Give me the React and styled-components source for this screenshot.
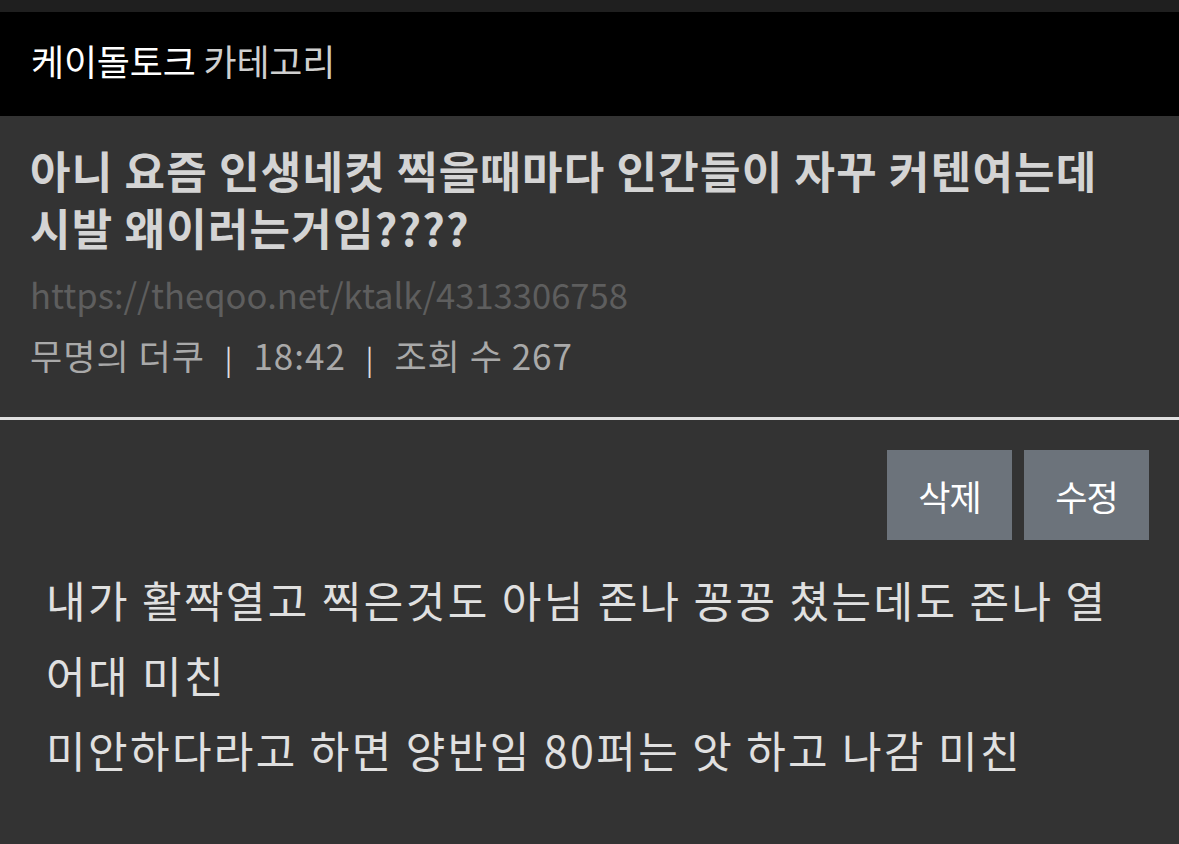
import React from 'react'
import styled, { createGlobalStyle } from 'styled-components';

const GlobalStyle = createGlobalStyle`
    html, body {
        margin: 0;
        padding: 0;
        background: #333333;
        font-family: 'Noto Sans CJK KR', 'Noto Sans', sans-serif;
    }
`;

const post = {
    board: '케이돌토크',
    title: '아니 요즘 인생네컷 찍을때마다 인간들이 자꾸 커텐여는데 시발 왜이러는거임????',
    url: 'https://theqoo.net/ktalk/4313306758',
    author: '무명의 더쿠',
    time: '18:42',
    views: 267,
    body: [
        '내가 활짝열고 찍은것도 아님 존나 꽁꽁 쳤는데도 존나 열어대 미친',
        '미안하다라고 하면 양반임 80퍼는 앗 하고 나감 미친',
    ],
}

const App = () => {
    return (
        <Page>
            <GlobalStyle />
            <TopStrip />
            <Header>
                <BoardName>{post.board}</BoardName> <Category>카테고리</Category>
            </Header>
            <TitleSection>
                <Title>{post.title}</Title>
                <Url>{post.url}</Url>
                <Meta>
                    {post.author}
                    <Sep>|</Sep>
                    {post.time}
                    <Sep>|</Sep>
                    조회 수 {post.views}
                </Meta>
            </TitleSection>
            <Actions>
                <ActionButton>삭제</ActionButton>
                <ActionButton>수정</ActionButton>
            </Actions>
            <Body>
                {post.body.map((line, i) => (
                    <p key={i}>{line}</p>
                ))}
            </Body>
        </Page>
    )
}

export default App

const Page = styled.div`
    width: 1179px;
    min-height: 844px;
    background: #333333;
`;

const TopStrip = styled.div`
    height: 12px;
    background: #1f1f1f;
`;

const Header = styled.div`
    height: 104px;
    padding: 0 30px 0 31px;
    box-sizing: border-box;
    background: #000;
    font-size: 36px;
    line-height: 96px;
    letter-spacing: -0.2px;
`;

const BoardName = styled.span`
    color: #ffffff;
`;

const Category = styled.span`
    color: #cfcfcf;
`;

const TitleSection = styled.div`
    padding: 26px 30px 36px;
    border-bottom: 3px solid #e0e0e0;
`;

const Title = styled.h1`
    margin: 0;
    font-size: 44px;
    line-height: 57px;
    font-weight: 700;
    color: #d4d4d4;
    letter-spacing: 1.2px;
    word-break: keep-all;
`;

const Url = styled.div`
    margin-top: 14px;
    font-size: 34.6px;
    line-height: 48px;
    color: #5e5e5e;
`;

const Meta = styled.div`
    margin-top: 14px;
    font-size: 35px;
    line-height: 46px;
    color: #a9a9a9;
    letter-spacing: 1px;
`;

const Sep = styled.span`
    display: inline-block;
    margin: 0 20px;
    color: #dddddd;
    font-size: 28px;
`;

const Actions = styled.div`
    display: flex;
    justify-content: flex-end;
    gap: 12px;
    padding: 30px 30px 0;
`;

const ActionButton = styled.button`
    width: 125px;
    height: 90px;
    border: none;
    background: #6c737b;
    color: #ffffff;
    font-family: 'Noto Sans CJK KR', 'Noto Sans', sans-serif;
    font-size: 35px;
    letter-spacing: -1px;
`;

const Body = styled.div`
    padding: 22px 50px 0 46px;
    font-size: 43px;
    line-height: 75px;
    color: #e0e0e0;
    letter-spacing: 2.4px;

    p {
        margin: 0;
    }
`;
